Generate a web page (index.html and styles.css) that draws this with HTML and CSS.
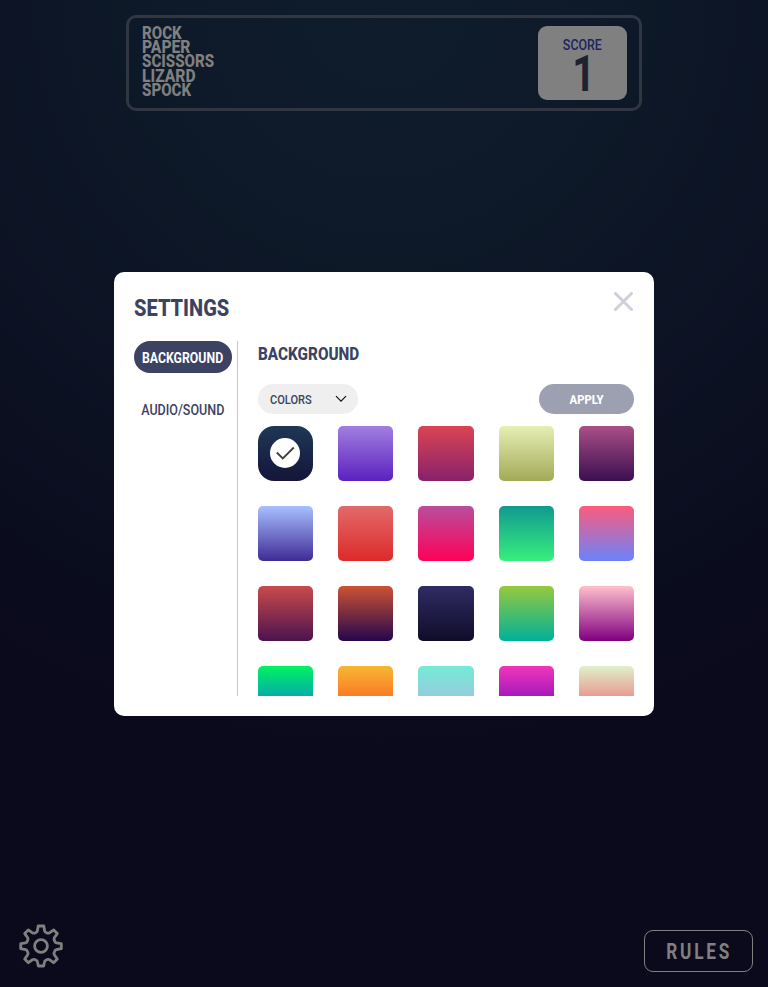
FILE: index.html
```html
<!DOCTYPE html>
<html lang="en">
<head>
<meta charset="utf-8">
<title>Rock Paper Scissors Lizard Spock</title>
<link rel="stylesheet" href="styles.css">
</head>
<body>
<div class="game">
  <header class="scoreboard">
    <h1 class="logo"><span>ROCK</span><span class="wide">PAPER</span><span>SCISSORS</span><span class="wide">LIZARD</span><span>SPOCK</span></h1>
    <div class="score"><span class="score-label">SCORE</span><span class="score-value">1</span></div>
  </header>
  <footer class="footer">
    <svg class="gear" viewBox="0 0 44 44" fill="none" stroke="#808080" stroke-width="2.8" stroke-linejoin="round"><circle cx="22" cy="22" r="6.400"/><path d="M19.200 2h5.600l.8 4.800q.2 1.300 1.400 1.700 2.300 1.200 3.500.3l4.200-2.900 3.600 3.700-3 4.200q-.7 1-.1 2.100l.7 1.700q.3 1.100 1.500 1.300l4.900.8v5l-4.900.9q-1.200.2-1.600 1.400l-.7 1.600q-.5 1.200.2 2.200l3 4.200-3.700 3.700-4.200-3q-1-.7-2.100-.2l-1.500.7q-1.100.4-1.300 1.600l-.8 4.200h-5.400l-.8-4.200q-.2-1.200-1.300-1.600l-1.500-.7q-1.100-.5-2.100.2l-4.200 3-3.700-3.700 3-4.200q.7-1 .2-2.200l-.7-1.600q-.4-1.200-1.600-1.400l-4.900-.9v-5l4.900-.8q1.200-.2 1.500-1.300l.7-1.700q.6-1.100-.1-2.100l-3-4.200 3.600-3.700 4.200 2.900q1.200.9 3.500-.3 1.200-.4 1.400-1.700z"/></svg>
    <button class="rules"><span>RULES</span></button>
  </footer>
</div>
<div class="overlay">
  <main class="modal">
    <div class="modal-head">
      <h2 class="title"><span>SETTINGS</span></h2>
      <svg class="close" viewBox="0 0 20 20" stroke="#cfcfda" stroke-width="3" stroke-linecap="round"><path d="M1.500 1.500l16 16M17.500 1.500l-16 16"/></svg>
    </div>
    <div class="modal-body">
      <nav class="tabs">
        <div class="tab active"><span>BACKGROUND</span></div>
        <div class="tab"><span>AUDIO/SOUND</span></div>
      </nav>
      <section class="panel">
        <h3 class="subtitle"><span>BACKGROUND</span></h3>
        <div class="controls">
          <div class="select"><span>COLORS</span><svg width="12" height="8" viewBox="0 0 12 8" fill="none" stroke="#111" stroke-width="1.2"><path d="M1 1.200l5 5 5-5"/></svg></div>
          <button class="apply"><span>APPLY</span></button>
        </div>
        <div class="swatches">
          <div class="swatch s1"><i class="check"><svg width="20" height="16" viewBox="0 0 20 16" fill="none" stroke="#3f3f3f" stroke-width="1.8"><path d="M1.800 7.500l6 6L18.800 2.500"/></svg></i></div>
          <div class="swatch s2"></div><div class="swatch s3"></div><div class="swatch s4"></div><div class="swatch s5"></div>
          <div class="swatch s6"></div><div class="swatch s7"></div><div class="swatch s8"></div><div class="swatch s9"></div><div class="swatch s10"></div>
          <div class="swatch s11"></div><div class="swatch s12"></div><div class="swatch s13"></div><div class="swatch s14"></div><div class="swatch s15"></div>
          <div class="swatch s16"></div><div class="swatch s17"></div><div class="swatch s18"></div><div class="swatch s19"></div><div class="swatch s20"></div>
        </div>
      </section>
    </div>
  </main>
</div>
</body>
</html>
```
FILE: styles.css
```css
* { box-sizing: border-box; margin: 0; padding: 0; }
body { height: 987px; overflow: hidden; font-family: Roboto, "Liberation Sans", sans-serif; color: #3b4262; }
button { font: inherit; border: 0; }
span { display: block; white-space: nowrap; }
.game { height: 987px; padding: 15px; display: flex; flex-direction: column; justify-content: space-between; background: radial-gradient(circle at top, #0f1c2b, #0e1a29 20%, #0a0a1c 70%); }
.scoreboard { width: 516px; height: 96px; margin: 0 auto; padding: 8px 12px 8px 13px; border: 3px solid #303642; border-radius: 10px; display: flex; justify-content: space-between; }
.logo { font-size: 18px; line-height: 14.2px; font-weight: 800; color: #808080; }
.logo span { transform: scaleX(.84); transform-origin: left; }
.logo .wide { transform: scaleX(.87); }
.score { width: 89px; height: 74px; border-radius: 9px; background: #808080; display: flex; flex-direction: column; align-items: center; padding-top: 10px; }
.score-label { font-size: 15.500px; line-height: 18px; font-weight: 500; color: #1c2360; transform: scaleX(.8); }
.score-value { font-size: 50px; line-height: 40px; font-weight: 700; color: #1e2131; transform: translateX(1.500px) scaleX(.8); }
.footer { display: flex; justify-content: space-between; align-items: center; height: 42px; }
.gear { width: 44px; height: 44px; margin: -11px 0 0 3.500px; }
.rules { width: 109px; height: 42px; border: 1px solid #808080; border-radius: 9px; background: none; color: #808080; font-size: 21.500px; font-weight: 700; letter-spacing: 3.500px; display: flex; justify-content: center; align-items: center; }
.rules span { transform: scaleX(.8); margin-right: -1px; }
.overlay { position: absolute; inset: 0; display: flex; justify-content: center; padding-top: 272px; }
.modal { width: 540px; height: 444px; padding: 20px; border-radius: 10px; background: #fff; display: flex; flex-direction: column; }
.modal-head { display: flex; justify-content: space-between; height: 49px; }
.title { font-size: 24px; line-height: 32px; font-weight: 800; }
.title span, .subtitle span { transform: scaleX(.835); transform-origin: left; }
.close { width: 20px; height: 20px; }
.modal-body { display: flex; height: 355px; }
.tabs { width: 104px; border-right: 1px solid #c8c8cc; display: flex; flex-direction: column; gap: 20px; }
.tab { width: 98px; height: 32px; border-radius: 16px; display: flex; align-items: center; justify-content: center; font-size: 15px; font-weight: 500; padding-top: 1px; }
.tab.active { background: #3b4262; color: #fff; font-weight: 700; }
.tab span { transform: scaleX(.835); }
.tab.active span { transform: scaleX(.82); }
.panel { margin-left: 20px; width: 376px; display: flex; flex-direction: column; }
.subtitle { height: 43px; font-size: 18px; line-height: 25px; font-weight: 800; }
.subtitle span { transform: scaleX(.85); }
.controls { display: flex; justify-content: space-between; height: 42px; }
.select { width: 100px; height: 30px; border-radius: 15px; background: #efefef; padding: 0 11px 0 12px; display: flex; align-items: center; justify-content: space-between; font-size: 13px; font-weight: 500; }
.select span { transform: scaleX(.85); transform-origin: left; }
.apply { width: 95px; height: 30px; border-radius: 15px; background: #9da0b1; color: #fff; font-size: 13px; font-weight: 800; }
.apply span { transform: scaleX(.87); }
.swatches { flex: 1; min-height: 0; overflow: hidden; display: grid; grid-template-columns: repeat(5, 55.200px); grid-auto-rows: 55px; gap: 25px; }
.swatch { border-radius: 5px; background: linear-gradient(var(--a), var(--b)); }
.s1 { --a: #1f3756; --b: #141539; border-radius: 16px; padding: 12px; }
.check { width: 30px; height: 30px; border-radius: 50%; background: #fff; display: grid; place-items: center; }
.s2 { --a: #a17fe0; --b: #5b21bf; }
.s3 { --a: #da4453; --b: #89216b; }
.s4 { --a: #e6efb4; --b: #a2aa57; }
.s5 { --a: #aa4f87; --b: #3b0e50; }
.s6 { --a: #a8c0ff; --b: #3f2b96; }
.s7 { --a: #e26a6a; --b: #dd2a2a; }
.s8 { --a: #b94e9d; --b: #ff0058; }
.s9 { --a: #11998e; --b: #38ef7d; }
.s10 { --a: #fc5c7d; --b: #6a82fb; }
.s11 { --a: #c94b4b; --b: #4b134f; }
.s12 { --a: #cc5333; --b: #23074d; }
.s13 { --a: #302b63; --b: #0f0c29; }
.s14 { --a: #96c93d; --b: #00b09b; }
.s15 { --a: #ffc0cb; --b: #800080; }
.s16 { --a: #00f260; --b: #0575e6; }
.s17 { --a: #f7b733; --b: #fc4a1a; }
.s18 { --a: #74ebd5; --b: #acb6e5; }
.s19 { --a: #f037b8; --b: #6b00c0; }
.s20 { --a: #dff1c8; --b: #ef5568; }
```
